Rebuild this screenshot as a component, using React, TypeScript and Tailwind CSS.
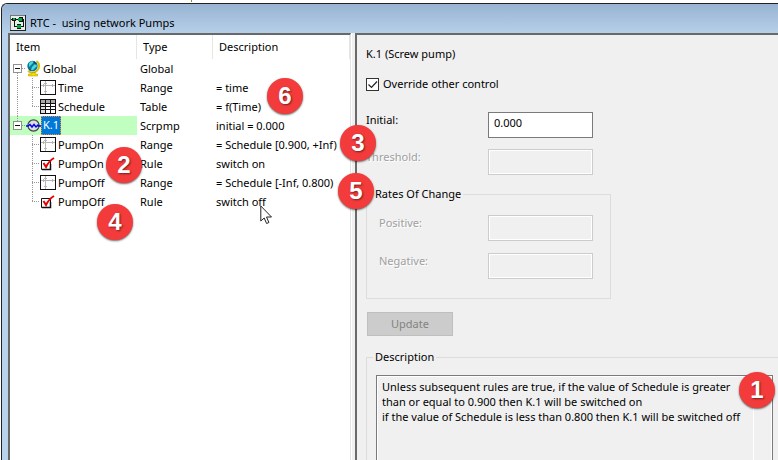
import React from "react";

type Kind = "globe" | "range" | "table" | "pump" | "rule";

interface Item {
  name: string;
  type: string;
  description: string;
  kind: Kind;
  root?: boolean;
  selected?: boolean;
  last?: boolean;
  outer?: boolean;
}

const items: Item[] = [
  { name: "Global", type: "Global", description: "", kind: "globe", root: true, outer: true },
  { name: "Time", type: "Range", description: "= time", kind: "range", outer: true },
  { name: "Schedule", type: "Table", description: "= f(Time)", kind: "table", outer: true, last: true },
  { name: "K.1", type: "Scrpmp", description: "initial = 0.000", kind: "pump", root: true, selected: true },
  { name: "PumpOn", type: "Range", description: "= Schedule [0.900, +Inf)", kind: "range" },
  { name: "PumpOn", type: "Rule", description: "switch on", kind: "rule" },
  { name: "PumpOff", type: "Range", description: "= Schedule [-Inf, 0.800)", kind: "range" },
  { name: "PumpOff", type: "Rule", description: "switch off", kind: "rule", last: true },
];

function AppIcon() {
  return (
    <svg width="16" height="16" viewBox="0 0 16 16" className="shrink-0" shapeRendering="crispEdges" aria-hidden="true">
      <path d="M0 0h16v16H0z" fill="#222" />
      <path d="M0 0h15v15H0z" fill="#e6eee8" />
      <path d="M0 0h15v1H0zM0 0h1v15H0z" fill="#777" />
      <path d="M1 4h2v1H1zM2 3h4v3H2zM9 2h4v5H9zM6 4h3v1H6zM4 6h1v6H4zM5 11h2v1H5zM7 9h4v5H7zM13 4h1v8h-1zM11 11h2v1h-2z" fill="#111" />
      <path d="M3 3h2v2H3zM8 3h4v3H8zM7 10h4v3H7z" fill="#00a844" />
    </svg>
  );
}

function ItemIcon({ kind }: { kind: Kind }) {
  if (kind === "globe")
    return (
      <svg width="15" height="17" viewBox="0 0 15 17" className="shrink-0" aria-hidden="true">
        <path d="M10.500 1c4 3 3.500 8.500-1.500 11.200Q5 13.500 2 11" fill="none" stroke="#d8bd00" strokeWidth="1.800" />
        <path d="M6 12.500h3v1.500h2.500v2h-9v-2H6z" fill="#f4df00" stroke="#a88c00" strokeWidth=".5" />
        <circle cx="6.500" cy="6" r="5.200" fill="#087a98" />
        <path d="M3 3l3-2 2 1-3 3-2 2zM6 7l4-4 1 3-4 4H5z" fill="#4bd9da" />
        <path d="M8 1l3 3-1 1-3-3zM2 8l3 2-1 1z" fill="#124672" />
      </svg>
    );
  if (kind === "range")
    return (
      <svg width="16" height="15" viewBox="0 0 16 15" className="shrink-0" shapeRendering="crispEdges" aria-hidden="true">
        <path d="M0 0h16v15H0z" fill="#111" />
        <path d="M1 1h14v13H1z" fill="#fff" />
        <path d="M1 5h14v1H1zM5 1h1v13H5zM4 3h3v1H4zM12 4h1v3h-1zM3 4h1v3H3zM4 11h3v1H4z" fill="#b5b5b5" />
      </svg>
    );
  if (kind === "table")
    return (
      <svg width="16" height="15" viewBox="0 0 16 15" className="shrink-0" shapeRendering="crispEdges" aria-hidden="true">
        <path d="M0 0h16v15H0z" fill="#111" />
        <path d="M1 1h4v3H1zM6 1h4v3H6zM11 1h4v3h-4z" fill="#aaa" />
        <path d="M1 5h4v2H1zM1 8h4v2H1zM1 11h4v3H1z" fill="#ddd" />
        <path d="M6 5h4v2H6zM11 5h4v2h-4zM6 8h4v2H6zM11 8h4v2h-4zM6 11h4v3H6zM11 11h4v3h-4z" fill="#fff" />
      </svg>
    );
  if (kind === "pump")
    return (
      <svg width="15" height="15" viewBox="0 0 15 15" className="shrink-0" aria-hidden="true">
        <circle cx="7.500" cy="7.500" r="5.600" fill="#dedede" stroke="#444" strokeWidth="1.200" />
        <path d="M0 8h2l2-1.500L6 9l2-2.500L10 9l2-2 1 1h2" fill="none" stroke="#0000f0" strokeWidth="1.500" />
      </svg>
    );
  return (
    <svg width="16" height="15" viewBox="0 0 16 15" className="shrink-0" aria-hidden="true">
      <path d="M1.500 4.500h9v9h-9z" fill="#fff" stroke="#111" />
      <path d="M10.500 8v5.500H2" fill="none" stroke="#111" strokeWidth="1.500" />
      <path d="M3.500 7l2.500 4Q9 5 14 2" fill="none" stroke="#e80000" strokeWidth="2" />
    </svg>
  );
}

function Guides({ item }: { item: Item }) {
  const dots = { stroke: "#9a9a9a", strokeDasharray: "1 1", fill: "none" };
  if (item.root)
    return (
      <svg width="16" height="19" viewBox="0 0 16 19" className="shrink-0" shapeRendering="crispEdges" aria-hidden="true">
        {item.outer ? <path d="M7.500 14v5" {...dots} /> : <path d="M7.500 0v5" {...dots} />}
        <path d="M12 9.500h4" {...dots} />
        <path d="M3.500 5.500h8v8h-8z" fill="#fff" stroke="#919191" />
        <path d="M5 9.500h5" stroke="#111" />
      </svg>
    );
  return (
    <svg width="30" height="19" viewBox="0 0 30 19" className="shrink-0" shapeRendering="crispEdges" aria-hidden="true">
      {item.outer && <path d="M7.500 0v19" {...dots} />}
      <path d={item.last ? "M22.500 0v9" : "M22.500 0v19"} {...dots} />
      <path d="M22 9.500h8" {...dots} />
    </svg>
  );
}

function Tree() {
  return (
    <table className="w-full table-fixed border-separate border-spacing-0 text-left">
      <colgroup>
        <col className="w-[127px]" />
        <col className="w-[76px]" />
        <col />
      </colgroup>
      <thead>
        <tr className="h-6">
          <th className="border-r border-[#e5e5e5] p-0 pl-1.5 font-normal">Item</th>
          <th className="border-r border-[#e5e5e5] p-0 pl-1.5 font-normal">Type</th>
          <th className="border-r border-[#e5e5e5] p-0 pl-1.5 font-normal">Description</th>
        </tr>
      </thead>
      <tbody>
        {items.map((item, i) => (
          <tr key={i} className="h-[19px]">
            <td className={item.selected ? "bg-[#c0ffc0] p-0" : "p-0"}>
              <div className="flex h-[19px] items-center">
                <Guides item={item} />
                <ItemIcon kind={item.kind} />
                {item.selected ? (
                  <span className="h-[19px] border border-dotted border-[#ff8728] bg-[#0078d7] px-px leading-4 text-white">
                    {item.name}
                  </span>
                ) : (
                  <span className="px-0.5">{item.name}</span>
                )}
              </div>
            </td>
            <td className="p-0 pl-[3px]">{item.type}</td>
            <td className="whitespace-nowrap p-0 pl-[3px]">{item.description}</td>
          </tr>
        ))}
      </tbody>
    </table>
  );
}

interface FieldProps {
  id: string;
  label: string;
  value?: string;
  disabled?: boolean;
  inset?: boolean;
}

function Field({ id, label, value = "", disabled, inset }: FieldProps) {
  return (
    <div className="flex h-[26px] items-start">
      <label
        htmlFor={id}
        className={`${inset ? "w-[109px]" : "w-[122px]"} ${
          disabled ? "text-[#a0a0a0] [text-shadow:1px_1px_0_#fff]" : "text-black"
        }`}
      >
        {label}
      </label>
      <input
        id={id}
        type="text"
        defaultValue={value}
        disabled={disabled}
        className={`h-[26px] w-[105px] border px-[5px] pb-1.5 ${
          disabled ? "border-[#ccc] bg-[#f0f0f0] shadow-[inset_0_0_0_1px_#fff]" : "border-[#7a7a7a] bg-white"
        }`}
      />
    </div>
  );
}

function Badge({ n, place }: { n: number; place: string }) {
  return (
    <span
      className={`absolute flex size-9 items-center justify-center rounded-full bg-[#f33b3b] font-['Liberation_Sans',sans-serif] text-2xl font-bold text-white shadow-[0_1px_2px_rgba(0,0,0,0.6)] [text-shadow:1px_1px_2px_rgba(0,0,0,0.5)] ${place}`}
    >
      {n}
    </span>
  );
}

const description =
  "Unless subsequent rules are true, if the value of Schedule is greater\nthan or equal to 0.900 then K.1 will be switched on\nif the value of Schedule is less than 0.800 then K.1 will be switched off";

export default function App() {
  return (
    <div className="relative flex h-screen flex-col overflow-hidden bg-white pl-px font-['Noto_Sans','Open_Sans',sans-serif] text-[11px] leading-4 text-black">
      <div className="h-[3px] shrink-0 pl-[190px]">
        <div className="h-0.5 w-px bg-[#8a8f3c]" />
      </div>
      <div className="flex min-h-0 flex-1 flex-col rounded-tl-md border-l border-t border-[#222] bg-[#b9d1ea]">
        <header className="flex h-[29px] shrink-0 items-center gap-1 rounded-tl-md bg-linear-to-b from-[#98b4d2] to-[#b6cfe9] pl-2 pt-2">
          <AppIcon />
          <h1 className="whitespace-pre">RTC -  using network Pumps</h1>
        </header>
        <main className="flex min-h-0 flex-1 pl-1.5">
          <section className="w-[343px] shrink-0 border-l-2 border-t-2 border-r border-l-[#696969] border-t-[#696969] border-r-[#e3e3e3] bg-white">
            <Tree />
          </section>
          <div className="w-1 shrink-0 border-l border-white bg-[#f0f0f0]" />
          <section className="min-w-0 flex-1 border-l-2 border-t-2 border-[#696969] bg-[#f0f0f0] pl-[9px] pt-[11px]">
            <h2>K.1 (Screw pump)</h2>
            <label className="mt-3.5 flex w-fit items-center gap-1">
              <span className="grid size-[13px]">
                <input
                  type="checkbox"
                  defaultChecked
                  className="peer col-start-1 row-start-1 size-[13px] appearance-none border border-[#333] bg-white"
                />
                <svg
                  width="13"
                  height="13"
                  viewBox="0 0 13 13"
                  className="pointer-events-none invisible col-start-1 row-start-1 peer-checked:visible"
                  aria-hidden="true"
                >
                  <path d="M2.500 6.500l3 3 5.500-6" fill="none" stroke="#222" strokeWidth="1.200" />
                </svg>
              </span>
              <span>Override other control</span>
            </label>
            <div className="mt-5 flex flex-col gap-[11px]">
              <Field id="initial" label="Initial:" value="0.000" />
              <Field id="threshold" label="Threshold:" disabled />
            </div>
            <fieldset className="mt-[11px] w-[245px] border border-[#dcdcdc] pb-[19px] pl-3">
              <legend className="-ml-1.5 px-0.5">Rates Of Change</legend>
              <div className="mt-[13px] flex flex-col gap-3">
                <Field id="positive" label="Positive:" disabled inset />
                <Field id="negative" label="Negative:" disabled inset />
              </div>
            </fieldset>
            <button
              type="button"
              disabled
              className="ml-px mt-[13px] block h-6 w-[86px] border border-[#bfbfbf] bg-[#ccc] text-[#838383]"
            >
              Update
            </button>
            <fieldset className="-mr-2 mt-[13px] h-[200px] border border-[#dcdcdc] pl-[9px] pr-3">
              <legend className="-ml-[3px] px-0.5">
                <label htmlFor="description">Description</label>
              </legend>
              <div className="mt-2.5 flex h-[160px] border border-[#7a7a7a] shadow-[inset_1px_1px_0_#fff,inset_-1px_0_0_#fff]">
                <textarea
                  id="description"
                  readOnly
                  wrap="off"
                  value={description}
                  className="min-w-0 flex-1 resize-none overflow-hidden border-r border-white px-[5px] pt-[3px] leading-[15px]"
                />
                <div className="w-[18px] shrink-0" />
              </div>
            </fieldset>
          </section>
        </main>
      </div>
      <Badge n={1} place="left-[739px] top-[372px]" />
      <Badge n={2} place="left-[106px] top-[147px]" />
      <Badge n={3} place="left-[340px] top-[125px]" />
      <Badge n={4} place="left-[97px] top-[204px]" />
      <Badge n={5} place="left-[338px] top-[173px]" />
      <Badge n={6} place="left-[267px] top-[78px]" />
      <svg width="13" height="20" viewBox="0 0 13 20" className="absolute left-[260px] top-[205px]" aria-hidden="true">
        <path d="M.8 1v15l3.400-3 2.400 5.500 2.300-1L6.500 12H11.500z" fill="#fff" stroke="#222" />
      </svg>
    </div>
  );
}
